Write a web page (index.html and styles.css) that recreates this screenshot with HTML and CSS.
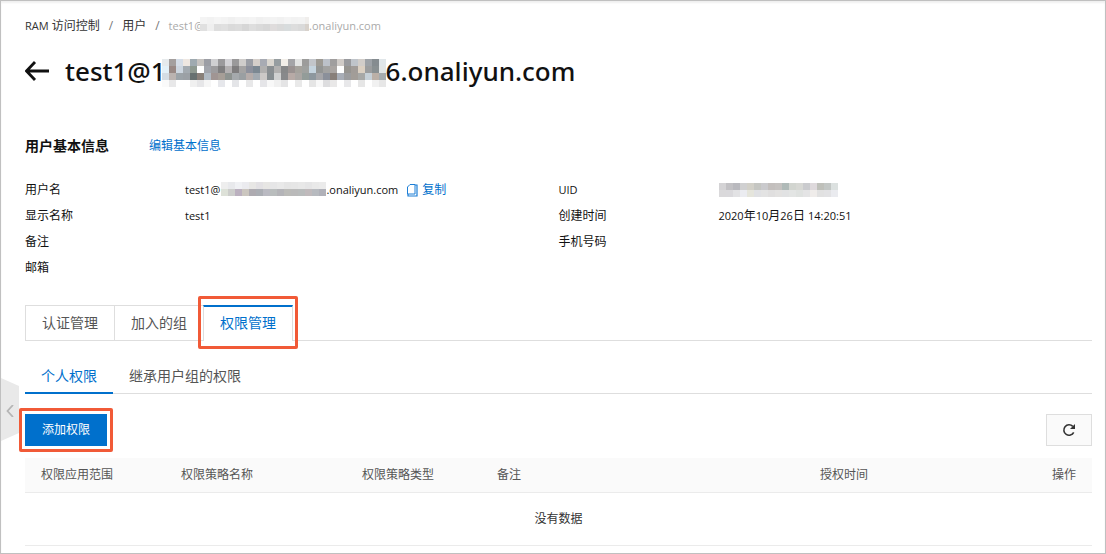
FILE: index.html
```
<!DOCTYPE html>
<html lang="zh-CN">
<head>
  <meta charset="UTF-8">
  <title>RAM 访问控制</title>
  <link rel="stylesheet" href="styles.css">
</head>
<body>
  <div class="page">
    <button class="collapse" type="button" aria-label="展开菜单">
      <svg width="8" height="12" viewBox="0 0 8 12"><path d="M7 0 1.5 6 7 12" fill="none" stroke="#b5b5b5" stroke-width="1.8"/></svg>
    </button>

    <nav class="breadcrumb">
      <a href="#"><span class="latin">RAM</span> 访问控制</a>
      <span class="sep">/</span>
      <a href="#">用户</a>
      <span class="sep">/</span>
      <span class="current latin">test1@<span class="mask mask-crumb" data-mask="crumb"></span>.onaliyun.com</span>
    </nav>

    <header class="title">
      <a href="#" class="back" aria-label="返回">
        <svg width="24" height="20" viewBox="0 0 24 20"><path d="M24 10H2M10 1 1.5 10 10 19" fill="none" stroke="#111" stroke-width="2.8"/></svg>
      </a>
      <h1>test1@1<span class="mask mask-title" data-mask="title"></span>6.onaliyun.com</h1>
    </header>

    <div class="section-head">
      <h2>用户基本信息</h2>
      <a href="#">编辑基本信息</a>
    </div>

    <div class="info">
      <dl>
        <dt>用户名</dt>
        <dd>
          <span class="latin">test1@<span class="mask mask-user" data-mask="user"></span>.onaliyun.com</span>
          <button class="copy" type="button">
            <svg width="12" height="14" viewBox="0 0 12 14"><path d="M4 1.5h5v9.5H1.5V4z" fill="none" stroke="#1c7ed6"/><path d="M9 2h2v11H2v-2" fill="none" stroke="#1c7ed6" stroke-width="1.2"/></svg>
            复制
          </button>
        </dd>
        <dt>显示名称</dt>
        <dd class="latin">test1</dd>
        <dt>备注</dt>
        <dd></dd>
        <dt>邮箱</dt>
        <dd></dd>
      </dl>
      <dl>
        <dt class="latin">UID</dt>
        <dd><span class="mask mask-uid" data-mask="uid"></span></dd>
        <dt>创建时间</dt>
        <dd><time datetime="2020-10-26T14:20:51"><span class="latin">2020</span>年<span class="latin">10</span>月<span class="latin">26</span>日 <span class="latin">14:20:51</span></time></dd>
        <dt>手机号码</dt>
        <dd></dd>
      </dl>
    </div>

    <div class="tabs" role="tablist">
      <button type="button" role="tab">认证管理</button>
      <button type="button" role="tab">加入的组</button>
      <button type="button" role="tab" class="active marked" aria-selected="true">权限管理</button>
    </div>

    <div class="subtabs" role="tablist">
      <button type="button" role="tab" class="active" aria-selected="true">个人权限</button>
      <button type="button" role="tab">继承用户组的权限</button>
    </div>

    <div class="toolbar">
      <button type="button" class="primary marked">添加权限</button>
      <button type="button" class="refresh" aria-label="刷新">
        <svg width="14" height="14" viewBox="0 0 14 14"><path d="M11.7 9.3A5.2 5.2 0 1 1 10.8 3.4" fill="none" stroke="#333" stroke-width="1.6"/><path d="M13 1v5H8z" fill="#333"/></svg>
      </button>
    </div>

    <table>
      <colgroup>
        <col class="col-scope">
        <col class="col-name">
        <col class="col-type">
        <col>
        <col class="col-time">
        <col class="col-action">
      </colgroup>
      <thead>
        <tr>
          <th>权限应用范围</th>
          <th>权限策略名称</th>
          <th>权限策略类型</th>
          <th>备注</th>
          <th>授权时间</th>
          <th>操作</th>
        </tr>
      </thead>
      <tbody>
        <tr>
          <td colspan="6">没有数据</td>
        </tr>
      </tbody>
    </table>
  </div>

  <script src="mask.js"></script>
</body>
</html>
```
FILE: styles.css
```
* {
  box-sizing: border-box;
}

body {
  margin: 0;
  font-family: "Open Sans", "Noto Sans CJK SC", sans-serif;
  font-size: 12px;
  line-height: 18px;
  color: #111;
  background: #fff;
}

a {
  color: #0070cc;
  text-decoration: none;
}

button {
  font: inherit;
  color: inherit;
  padding: 0;
  border: 0;
  background: none;
  cursor: pointer;
}

h1, h2, dl, dd {
  margin: 0;
}

svg {
  display: block;
}

.page {
  position: relative;
  min-height: 100vh;
  padding: 16px 13px 7px 24px;
  border: 1px solid #c0c0c0;
  box-shadow: inset 0 2px 2px #f0f0f0;
}

.latin {
  font-size: 11px;
}

/* 侧边栏展开按钮 */
.collapse {
  position: absolute;
  left: 0;
  top: 377px;
  width: 18px;
  height: 63px;
  padding: 3px 0 0 5px;
  background: #e9e9e9;
  clip-path: polygon(0 0, 100% 8px, 100% 55px, 0 100%);
}

/* 面包屑 */
.breadcrumb {
  display: flex;
  gap: 9px;
}

.breadcrumb a {
  color: #333;
}

.breadcrumb .sep {
  color: #777;
}

.breadcrumb .current {
  color: #aaa;
}

/* 打码区域 */
.mask {
  display: inline-block;
  vertical-align: middle;
}

.mask-crumb {
  width: 109px;
  height: 16px;
  margin: -4px 0 0 -4px;
}

.mask-title {
  width: 224px;
  height: 28px;
  margin: -2px 0 0 -4px;
}

.mask-user {
  width: 105px;
  height: 14px;
  margin: -5px 0 0 1px;
}

.mask-uid {
  width: 119px;
  height: 14px;
}

.title {
  display: flex;
  align-items: center;
  gap: 16px;
  margin-top: 16px;
}

.title h1 {
  font-family: "Noto Sans", "Noto Sans CJK SC", sans-serif;
  font-size: 26px;
  font-weight: 500;
  line-height: 40px;
}

.section-head {
  display: flex;
  align-items: center;
  gap: 40px;
  margin-top: 45px;
}

.section-head h2 {
  font-size: 14px;
  line-height: 20px;
}

/* 基本信息 */
.info {
  display: grid;
  grid-template-columns: 1fr 1fr;
  align-items: start;
  margin-top: 21px;
}

.info dl {
  display: grid;
  grid-template-columns: 160px 1fr;
  grid-auto-rows: 26px;
  line-height: 26px;
}

.info dd {
  display: flex;
  align-items: center;
}

.copy {
  display: inline-flex;
  align-items: center;
  gap: 4px;
  margin-left: 8px;
  color: #0070cc;
}

/* 标签页 */
.tabs {
  display: flex;
  margin-top: 24px;
  border-bottom: 1px solid #dedede;
  font-size: 14px;
  line-height: 20px;
  color: #555;
}

.tabs button {
  height: 35px;
  padding: 0 16px;
  border: 1px solid #dedede;
  border-width: 1px 0 0 1px;
}

.tabs .active {
  height: 36px;
  margin-bottom: -1px;
  padding-bottom: 2px;
  border-width: 2px 1px 0;
  border-top-color: #0070cc;
  background: #fff;
  color: #0070cc;
}

.subtabs {
  display: flex;
  margin-top: 19px;
  border-bottom: 1px solid #dedede;
  font-size: 14px;
  line-height: 20px;
  color: #555;
}

.subtabs button {
  height: 34px;
  margin-bottom: -1px;
  padding: 0 16px;
  border-bottom: 2px solid transparent;
}

.subtabs .active {
  border-color: #0070cc;
  color: #0070cc;
}

.toolbar {
  display: flex;
  justify-content: space-between;
  margin: 20px 0 12px;
}

.primary {
  height: 32px;
  padding: 0 17px;
  background: #0070cc;
  color: #fff;
}

.refresh {
  display: flex;
  align-items: center;
  justify-content: center;
  width: 46px;
  height: 32px;
  border: 1px solid #dedede;
  background: #fafafa;
}

/* 红色标注框 */
.marked {
  position: relative;
}

.marked::after {
  content: "";
  position: absolute;
  inset: -6px;
  border: 3px solid #f15a37;
  border-radius: 2px;
}

.tabs .marked::after {
  inset: -11px -6px -8px;
}

/* 权限列表 */
table {
  width: 100%;
  table-layout: fixed;
  border-collapse: collapse;
}

th, td {
  padding: 8px 16px;
  border-bottom: 1px solid #ebebeb;
}

th {
  height: 34px;
  background: #fafafa;
  font-weight: normal;
  text-align: left;
  color: #555;
}

th:last-child {
  text-align: right;
}

td {
  height: 53px;
  text-align: center;
  color: #333;
}

.col-scope { width: 140px; }
.col-name { width: 181px; }
.col-type { width: 135px; }
.col-time { width: 20%; }
.col-action { width: 7%; }
```
FILE: mask.js
```
// 每行一组灰度色块
const masks = {
  crumb: { size: 7, rows: [
    "f4f4f4 f2f2f2 f5f5f5 f3f3f3 f0f0f0 f3f3f3 f2f2f2 f4f4f4 f0f0f0 f2f2f2 f3f3f3 f1f1f1 f4f4f4 f2f2f2 f3f3f3 f0eeec",
    "e0e0e0 efefef dedede e0e0e0 dadada dcdcdc d6d6d6 dedede dadada d7d7d7 dfdcdc dadada d8dcdd dddddd dadada d8d2cc"
  ] },
  title: { size: 7, rows: [
    "e6eaec a49f9e d5dde7 eee7e1 9faab0 c5c2bf 9c9ea5 d0d0d2 9b9a9c d3d2d6 9a999a cfcdcb 9c9fa6 d5cfca a8abb3 dad6cf 969da0 f2eee8 a4a4a7 e2e3e2 9c9c9b c2c5ca 9d9a94 bcc1c9 a09e9e d0cbc7 999a9e bfc4ca d1cdc9 9da2a7 858c90 e0e6e9",
    "e4f1f8 998985 cdd6e0 a3aab0 8e9990 ffffff a2a5ac 9d9c9e 807f80 b3b0b1 7f7d7e a4a3a3 8c909c 7c8892 b1b0af 898e91 b2b1b0 868788 9a9291 a5a29c 9fa19f c5d4df 939594 a2a2a1 aaa5a2 ffffff 969490 a19c98 dbd0c2 9b9d9e 899092 e1e5e6",
    "d5dde4 bbb3b0 9ca3a8 9ba0a5 677170 898079 b1bac3 a09593 a69e97 8e9390 a5a9ac 9a9fa2 b5acaa a3aab1 ccc9c7 878e91 d0d1d1 88898b b7aaa6 aaa6a3 939c99 8d979e a5a5a8 8b909a 887f79 a8adb6 9b9c9e a29d98 a7a8a6 c6d0d7 bbb0a7 a5abae",
    "fafafa e8e8e9 ffffff ffffff f0f0f0 e6e6e8 f6f6f6 ffffff e6e7eb ffffff e4e5e8 ffffff e8e8e9 ffffff e5e5e8 f8f8f8 f0f0f0 e4e4e5 ffffff e9e9e9 ffffff e5e5e5 f8f8f8 dddddf e9e8e8 ffffff e8e8ea ffffff e6e6e6 ffffff f1f1f1 e7e7e7"
  ] },
  user: { size: 7, rows: [
    "eeeeee e8e9ec f0f1f4 ebebef e8e7e5 e3e1e4 e7e6e4 e6e6e7 e9e9e9 e5e5e5 e6e6e6 e8e8e8 e5e5e6 e9e9e9 ebebeb",
    "dde1d8 cccdcb bbb0bf cbc6bf aeabb1 abaeb4 babac2 b9bdbd b4b4b8 bbbbb8 bababa b9bcbc c0babc b7babf b0b1b9"
  ] },
  uid: { size: 7, rows: [
    "d4d3d5 c2c1c4 b9b9be d0d0d1 d2d0c8 c5c6c2 cacacd c3bfbd c5c2c0 b0bab8 d2d5d0 d7d8d4 cacbce ded9dc bfc0ba c3c7c5 dce1e0",
    "dad9db dad9dc e2e2e4 ebecf1 e5e5dc e0e1e4 e3e3e3 e0dfdf e3e2e1 e1e2e3 e3e5e4 dfe2e0 e4e4e5 efecea e1e1e1 e2e2e4 eaebef"
  ] }
};

document.querySelectorAll("[data-mask]").forEach(el => {
  const { size, rows } = masks[el.dataset.mask];
  let rects = "";
  rows.forEach((row, y) => {
    row.split(" ").forEach((color, x) => {
      rects += `<rect x="${x * size}" y="${y * size}" width="${size}" height="${size}" fill="#${color}"/>`;
    });
  });
  el.innerHTML = `<svg width="100%" height="100%" shape-rendering="crispEdges">${rects}</svg>`;
});
```
